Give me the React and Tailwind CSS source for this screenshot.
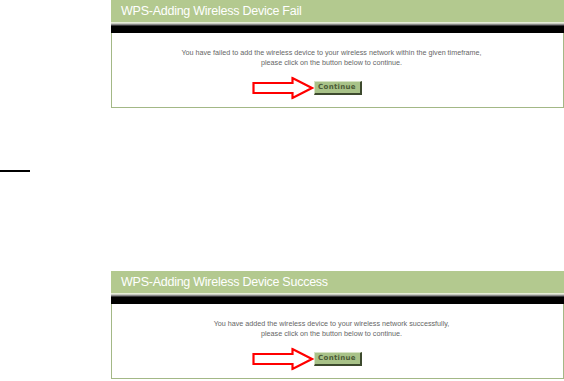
import React from "react";

function Arrow() {
  return (
    <svg width="62" height="23" viewBox="0 0 62 23" className="absolute right-full top-1/2 -translate-y-1/2">
      <path d="M1.5 6.5 H40.5 V1.5 L60 11.5 L40.5 21.5 V16.5 H1.5 Z" fill="#fff" stroke="#ff0000" strokeWidth="2.2" strokeLinejoin="miter" />
    </svg>
  );
}

function Panel({ title, line1, line2, className }) {
  return (
    <div className={`ml-[111px] w-[453px] flex flex-col ${className || ""}`}>
      <div className="h-[22px] bg-[#b3c98f] flex items-center pl-[10px] pt-[1px]">
        <span className="text-white text-[12.5px] tracking-[-0.25px] leading-none" style={{ fontFamily: "'Liberation Sans', Arial, sans-serif" }}>
          {title}
        </span>
      </div>
      <div className="h-[1px] bg-[#e6ecd9]" />
      <div className="h-[1px] bg-[#c8ccc0]" />
      <div className="h-[1px] bg-[#8a8a8a]" />
      <div className="h-[1px] bg-[#3a3a3a]" />
      <div className="h-[7px] bg-black" />
      <div className="h-[75px] border-l border-r border-b border-[#a3b886] bg-white flex flex-col items-center">
        <div
          className="mt-[15px] pr-[12px] text-center text-[#666666] text-[7.2px] leading-[10px]"
          style={{ fontFamily: "'Liberation Sans', Arial, sans-serif" }}
        >
          <div>{line1}</div>
          <div>{line2}</div>
        </div>
        <div className="relative mt-[13px]">
          <Arrow />
          <div
            className="w-[48px] h-[14px] bg-[#a8c288] border-t border-l border-[#d6e3c5] border-r-2 border-b-2 border-r-[#3d4a2e] border-b-[#3d4a2e] flex items-center justify-center text-[7px] font-bold tracking-[0.3px] text-[#4b5a36]"
            style={{ fontFamily: "'DejaVu Sans', sans-serif" }}
          >
            Continue
          </div>
        </div>
      </div>
    </div>
  );
}

export default function App() {
  return (
    <div className="w-[564px] h-[381px] bg-white relative overflow-hidden flex flex-col">
      <Panel
        title="WPS-Adding Wireless Device Fail"
        line1="You have failed to add the wireless device to your wireless network within the given timeframe,"
        line2="please click on the button below to continue."
      />
      <div className="mt-[62px] w-[30px] h-[2px] bg-black" />
      <Panel
        className="mt-[99px]"
        title="WPS-Adding Wireless Device Success"
        line1="You have added the wireless device to your wireless network successfully,"
        line2="please click on the button below to continue."
      />
    </div>
  );
}
